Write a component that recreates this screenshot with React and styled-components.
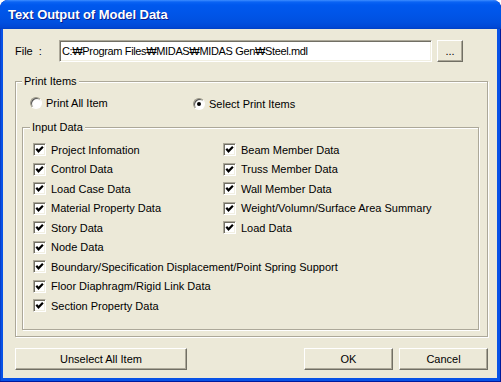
import React from "react";
import styled, { createGlobalStyle } from "styled-components";

const GlobalStyle = createGlobalStyle`
  html, body {
    margin: 0;
    padding: 0;
    background: #ffffff;
  }
  * {
    box-sizing: border-box;
  }
`;

const leftItems = [
  "Project Infomation",
  "Control Data",
  "Load Case Data",
  "Material Property Data",
  "Story Data",
  "Node Data",
  "Boundary/Specification Displacement/Point Spring Support",
  "Floor Diaphragm/Rigid Link Data",
  "Section Property Data",
];

const rightItems = [
  "Beam Member Data",
  "Truss Member Data",
  "Wall Member Data",
  "Weight/Volumn/Surface Area Summary",
  "Load Data",
];

const Window = styled.div`
  width: 501px;
  height: 382px;
  display: flex;
  flex-direction: column;
  border-radius: 8px 8px 0 0;
  background: #0852e6;
  box-shadow: inset -1px -1px 0 #00199c, inset 1px 0 0 #0a3fc9;
  font-family: "Liberation Sans", Arial, sans-serif;
  font-size: 11px;
  color: #000;
  overflow: hidden;
`;

const TitleBar = styled.div`
  height: 29px;
  flex: none;
  display: flex;
  align-items: center;
  padding: 0 0 0 8px;
  border-radius: 8px 8px 0 0;
  background: linear-gradient(
    #3d8dff 0px,
    #0a63f4 2px,
    #0058ee 5px,
    #0055e8 14px,
    #0050e0 22px,
    #0048d6 27px,
    #003fc4 29px
  );
  color: #fff;
  font-weight: bold;
  font-size: 13px;
  letter-spacing: -0.05px;
  text-shadow: 1px 1px 0 #0a1e8c;
`;

const Body = styled.div`
  flex: 1;
  margin: 0 4px 4px 3px;
  background: #ece9d8;
  display: flex;
  flex-direction: column;
  padding: 11px 9px 0 12px;
`;

const FileRow = styled.div`
  display: flex;
  align-items: center;
  height: 22px;
`;

const FileLabel = styled.span`
  width: 44px;
  word-spacing: 3px;
`;

const PathInput = styled.div`
  width: 373px;
  height: 22px;
  background: #fff;
  border: 1px solid;
  border-color: #aca899 #ffffff #ffffff #aca899;
  box-shadow: inset 1px 1px 0 #716f64, inset -1px -1px 0 #f1efe2;
  padding: 0 2px;
  display: flex;
  align-items: center;
  white-space: nowrap;
  overflow: hidden;
  font-size: 11px;
  letter-spacing: -0.35px;
`;

const Button = styled.button`
  width: ${(p) => p.$w}px;
  height: 22px;
  margin-left: ${(p) => p.$ml || 0}px;
  padding: 0;
  background: #ece9d8;
  border: 1px solid;
  border-color: #ffffff #716f64 #716f64 #ffffff;
  box-shadow: inset -1px -1px 0 #aca899;
  font-family: "Liberation Sans", Arial, sans-serif;
  font-size: 11px;
  color: #000;
  display: flex;
  align-items: center;
  justify-content: center;
`;

const Group = styled.div`
  position: relative;
  display: flex;
  flex-direction: column;
  border: 1px solid #aca899;
  box-shadow: 1px 1px 0 #fff, inset 1px 1px 0 #fff;
  margin-top: ${(p) => p.$mt}px;
  height: ${(p) => (p.$h ? `${p.$h}px` : "auto")};
  flex: ${(p) => (p.$grow ? 1 : "none")};
  padding: ${(p) => p.$pad};
`;

const Legend = styled.span`
  position: absolute;
  top: -7px;
  left: ${(p) => p.$left}px;
  padding: 0 2px;
  line-height: 13px;
  background: #ece9d8;
`;

const RadioRow = styled.div`
  display: flex;
  align-items: center;
  height: 14px;
  margin-top: 14px;
  padding-left: 8px;
`;

const RadioLabel = styled.label`
  display: flex;
  align-items: center;
  gap: 4px;
  width: ${(p) => p.$w}px;
  margin-top: ${(p) => p.$dy || 0}px;
`;

const RadioCircle = styled.span`
  width: 12px;
  height: 12px;
  border-radius: 50%;
  background: radial-gradient(circle at 60% 60%, #ffffff 40%, #e6e3d6 100%);
  border: 1px solid;
  border-color: #9b9888 #ffffff #ffffff #9b9888;
  box-shadow: inset 1px 1px 0 #555;
  display: flex;
  align-items: center;
  justify-content: center;
  &::after {
    content: "";
    width: 4px;
    height: 4px;
    border-radius: 50%;
    background: ${(p) => (p.$on ? "#000" : "transparent")};
  }
`;

const Columns = styled.div`
  display: flex;
  padding: 12px 0 0 10px;
`;

const Column = styled.div`
  width: ${(p) => p.$w}px;
  display: flex;
  flex-direction: column;
`;

const CheckRow = styled.label`
  height: 19.5px;
  display: flex;
  align-items: center;
  gap: 5px;
  white-space: nowrap;
`;

const Box = styled.span`
  width: 13px;
  height: 13px;
  flex: none;
  background: #fff;
  border: 1px solid;
  border-color: #aca899 #ffffff #ffffff #aca899;
  box-shadow: inset 1px 1px 0 #716f64, inset -1px -1px 0 #f1efe2;
  display: flex;
  align-items: center;
  justify-content: center;
`;

const ButtonRow = styled.div`
  display: flex;
  margin-top: 11px;
`;

const Check = ({ label }) => (
  <CheckRow>
    <Box>
      <svg width="9" height="9" viewBox="0 0 9 9">
        <path
          d="M1.3 3.8 L3.5 6.3 L7.9 1.7"
          fill="none"
          stroke="#000"
          strokeWidth="2.2"
        />
      </svg>
    </Box>
    {label}
  </CheckRow>
);

const App = () => {
  return (
    <>
      <GlobalStyle />
      <Window>
        <TitleBar>Text Output of Model Data</TitleBar>
        <Body>
          <FileRow>
            <FileLabel>File :</FileLabel>
            <PathInput>C:₩Program Files₩MIDAS₩MIDAS Gen₩Steel.mdl</PathInput>
            <Button $w={26} $ml={5}>...</Button>
          </FileRow>

          <Group $mt={19} $h={256} $pad="0 8px 6px 6px">
            <Legend $left={6}>Print Items</Legend>
            <RadioRow>
              <RadioLabel $w={163}>
                <RadioCircle />
                Print All Item
              </RadioLabel>
              <RadioLabel $dy={2}>
                <RadioCircle $on />
                Select Print Items
              </RadioLabel>
            </RadioRow>

            <Group $mt={17} $grow $pad="0">
              <Legend $left={7}>Input Data</Legend>
              <Columns>
                <Column $w={190}>
                  {leftItems.map((item) => (
                    <Check key={item} label={item} />
                  ))}
                </Column>
                <Column>
                  {rightItems.map((item) => (
                    <Check key={item} label={item} />
                  ))}
                </Column>
              </Columns>
            </Group>
          </Group>

          <ButtonRow>
            <Button $w={172}>Unselect All Item</Button>
            <Button $w={89} $ml={117}>OK</Button>
            <Button $w={89} $ml={6}>Cancel</Button>
          </ButtonRow>
        </Body>
      </Window>
    </>
  );
};

export default App;
